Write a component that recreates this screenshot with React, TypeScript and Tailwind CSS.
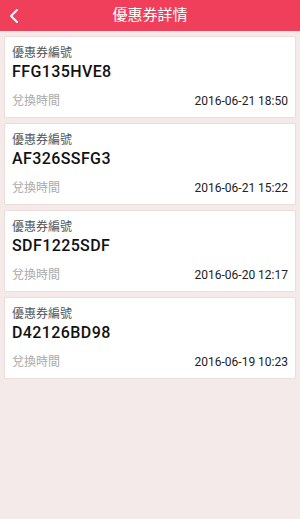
import React from "react";

const items = [
  { code: "FFG135HVE8", time: "2016-06-21 18:50" },
  { code: "AF326SSFG3", time: "2016-06-21 15:22" },
  { code: "SDF1225SDF", time: "2016-06-20 12:17" },
  { code: "D42126BD98", time: "2016-06-19 10:23" },
];

const font = { fontFamily: 'Roboto, "Noto Sans CJK TC", sans-serif' };

export default function App() {
  return (
    <div
      className="w-[300px] h-[519px] bg-[#f5eaea] flex flex-col"
      style={font}
    >
      <div className="h-[31px] bg-[#ef3f5b] relative flex items-center justify-center shrink-0">
        <svg
          className="absolute left-[8px] top-[8px]"
          width="12"
          height="16"
          viewBox="0 0 12 16"
          fill="none"
        >
          <path
            d="M9 2 L3 8 L9 14"
            stroke="white"
            strokeWidth="2"
            strokeLinecap="round"
            strokeLinejoin="round"
          />
        </svg>
        <span className="text-white text-[15px] leading-none">優惠券詳情</span>
      </div>
      <div className="flex flex-col gap-[5px] px-[4px] pt-[5px]">
        {items.map((it) => (
          <div
            key={it.code}
            className="bg-white border border-[#ecdcdc] rounded-[2px] px-[7px] pt-[7px] pb-[7px]"
          >
            <div className="text-[12px] leading-[18px] text-[#555]">優惠券編號</div>
            <div className="text-[16px] leading-[20px] font-medium text-[#111] tracking-[0.4px]">
              {it.code}
            </div>
            <div className="mt-[10px] flex justify-between items-center text-[12px] leading-[18px]">
              <span className="text-[#aaa]">兌換時間</span>
              <span className="text-[#222]">{it.time}</span>
            </div>
          </div>
        ))}
      </div>
    </div>
  );
}
